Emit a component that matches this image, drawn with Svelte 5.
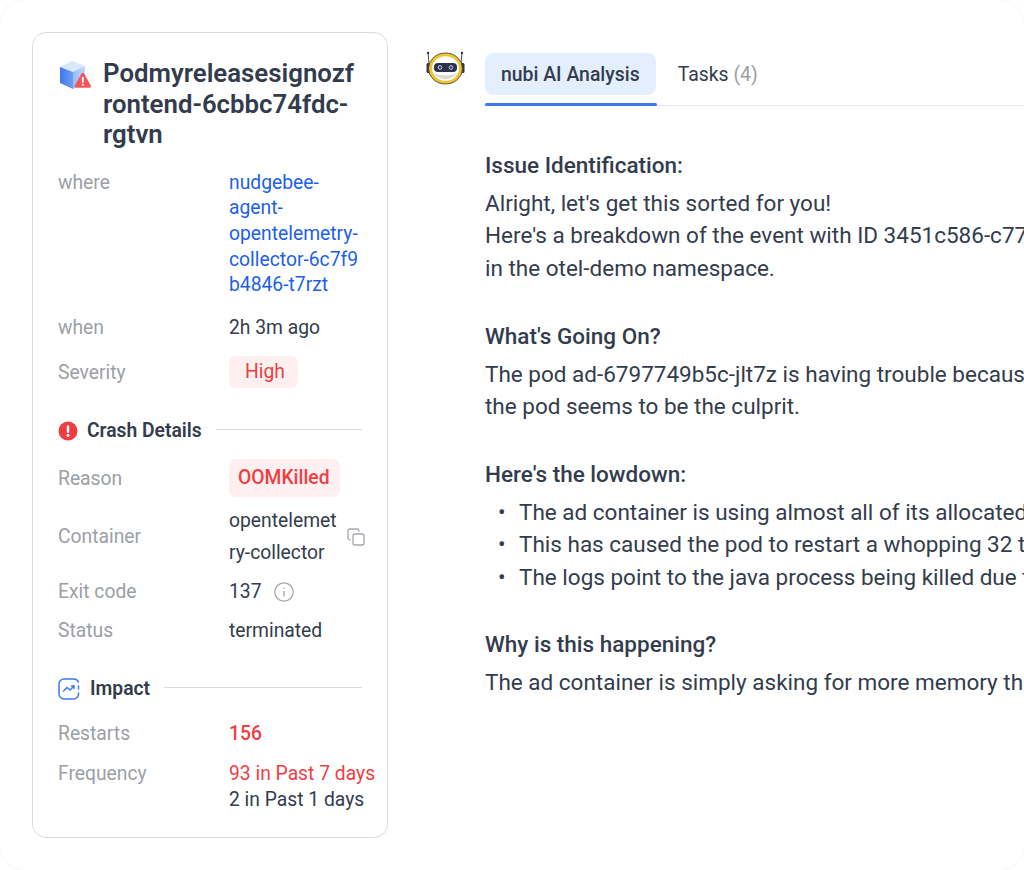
<script lang="ts">
  const where = ['nudgebee-', 'agent-', 'opentelemetry-', 'collector-6c7f9', 'b4846-t7rzt']
</script>

<div class="page">
  <aside class="card">
    <header class="title">
      <svg class="pod" viewBox="0 0 34 34" width="34" height="34" aria-hidden="true">
        <defs>
          <linearGradient id="left-face" x1="0" x2="1" y1="0" y2="0">
            <stop offset="0" stop-color="#3f78ea" />
            <stop offset="1" stop-color="#6f9df0" />
          </linearGradient>
          <linearGradient id="right-face" x1="0" x2="1" y1="0" y2="0">
            <stop offset="0" stop-color="#97b9f5" />
            <stop offset="1" stop-color="#c6d9fb" />
          </linearGradient>
        </defs>
        <path d="M2 8 L14 2 L27 7 L15 13 Z" fill="#dae8fd" />
        <path d="M2 8 L15 13 V30 L2 24 Z" fill="url(#left-face)" />
        <path d="M15 13 L27 7 V23 L15 30 Z" fill="url(#right-face)" />
        <path d="M23.500 14.500 a1.500 1.500 0 0 1 2.600 0 l6.700 12 a1.500 1.500 0 0 1 -1.300 2.300 h-13.400 a1.500 1.500 0 0 1 -1.300 -2.300 Z" fill="#f0575a" />
        <rect x="23.900" y="18" width="1.800" height="5.500" fill="#fff" />
        <rect x="23.900" y="24.800" width="1.800" height="1.900" fill="#fff" />
      </svg>
      <h1>Podmyreleasesignozf<br />rontend-6cbbc74fdc-<br />rgtvn</h1>
    </header>

    <dl class="rows">
      <div class="row where">
        <dt>where</dt>
        <dd class="link">
          {#each where as part}<span>{part}</span>{/each}
        </dd>
      </div>
      <div class="row when">
        <dt>when</dt>
        <dd>2h 3m ago</dd>
      </div>
      <div class="row severity">
        <dt>Severity</dt>
        <dd><span class="pill">High</span></dd>
      </div>
    </dl>

    <div class="section crash">
      <svg viewBox="0 0 20 20" width="20" height="20" aria-hidden="true">
        <circle cx="10" cy="10" r="9.500" fill="#ef3e42" />
        <rect x="8.800" y="4.300" width="2.400" height="7.600" rx="1.200" fill="#fff" />
        <circle cx="10" cy="14.500" r="1.400" fill="#fff" />
      </svg>
      <h2>Crash Details</h2>
      <span class="rule"></span>
    </div>

    <dl class="rows">
      <div class="row reason">
        <dt>Reason</dt>
        <dd><span class="pill strong">OOMKilled</span></dd>
      </div>
      <div class="row container">
        <dt>Container</dt>
        <dd class="with-icon">
          <span class="stack"><span>opentelemet</span><span>ry-collector</span></span>
          <svg viewBox="0 0 18 18" width="18" height="18" fill="none" stroke="#a3a7ad" stroke-width="1.300" aria-hidden="true">
            <rect x="6" y="6" width="11" height="11" rx="2" />
            <path d="M3.500 12 H3 a2 2 0 0 1 -2 -2 V3 a2 2 0 0 1 2 -2 h7 a2 2 0 0 1 2 2 v.5" />
          </svg>
        </dd>
      </div>
      <div class="row exit">
        <dt>Exit code</dt>
        <dd class="inline">
          137
          <svg viewBox="0 0 20 20" width="20" height="20" fill="none" stroke="#a3a7ad" stroke-width="1.300" aria-hidden="true">
            <circle cx="10" cy="10" r="9.200" />
            <path d="M10 9 V14.500" />
            <path d="M10 5.500 V6.800" />
          </svg>
        </dd>
      </div>
      <div class="row status">
        <dt>Status</dt>
        <dd>terminated</dd>
      </div>
    </dl>

    <div class="section impact">
      <svg viewBox="0 0 22 22" width="22" height="22" fill="none" stroke="#3b78f2" stroke-width="1.500" stroke-linecap="round" stroke-linejoin="round" aria-hidden="true">
        <path d="M20.500 15 V16 a5 5 0 0 1 -5 5 H6 a5 5 0 0 1 -5 -5 V6 a5 5 0 0 1 5 -5 H16 a5 5 0 0 1 4.500 3" />
        <path d="M20.500 8 V11" />
        <path d="M5.500 13 L9 9.500 L12 12 L16 8" />
        <path d="M13.500 8 H16 V10.500" />
      </svg>
      <h2>Impact</h2>
      <span class="rule"></span>
    </div>

    <dl class="rows">
      <div class="row restarts">
        <dt>Restarts</dt>
        <dd class="alert strong-num">156</dd>
      </div>
      <div class="row frequency">
        <dt>Frequency</dt>
        <dd class="stack"><span class="alert">93 in Past 7 days</span><span>2 in Past 1 days</span></dd>
      </div>
    </dl>
  </aside>

  <main class="analysis">
    <svg class="robot" viewBox="0 0 40 36" width="40" height="36" aria-hidden="true">
      <path d="M2 2 L3 12 M36 2 L35 12" stroke="#4a4f5c" stroke-width="1" />
      <circle cx="2" cy="2" r="1.200" fill="#2f3648" />
      <circle cx="36" cy="2" r="1.200" fill="#2f3648" />
      <rect x="0.500" y="12" width="4" height="10" rx="1.500" fill="#2f3648" />
      <rect x="34.500" y="12" width="4" height="10" rx="1.500" fill="#2f3648" />
      <ellipse cx="19.500" cy="17.500" rx="17" ry="15.500" fill="#f6c22c" stroke="#2f3648" stroke-width="0.800" />
      <ellipse cx="19.500" cy="17.500" rx="13.500" ry="12.300" fill="#fff" />
      <path d="M7 22 Q19.500 34.500 32 22 Q19.500 27 7 22 Z" fill="#d9d9d9" />
      <rect x="8" y="12" width="23" height="9" rx="4" fill="#2a3350" />
      <circle cx="14" cy="16.500" r="1.800" fill="none" stroke="#cfd6e6" stroke-width="1" />
      <circle cx="25" cy="16.500" r="1.800" fill="none" stroke="#cfd6e6" stroke-width="1" />
    </svg>

    <div class="content">
      <nav class="tabs">
        <button class="tab active">nubi AI Analysis</button>
        <button class="tab">Tasks <span class="count">(4)</span></button>
      </nav>

      <article class="body">
        <section>
          <h3>Issue Identification:</h3>
          <p>Alright, let's get this sorted for you!</p>
          <p>Here's a breakdown of the event with ID 3451c586-c77f</p>
          <p>in the otel-demo namespace.</p>
        </section>
        <section>
          <h3>What's Going On?</h3>
          <p>The pod ad-6797749b5c-jlt7z is having trouble because</p>
          <p>the pod seems to be the culprit.</p>
        </section>
        <section>
          <h3>Here's the lowdown:</h3>
          <ul>
            <li>The ad container is using almost all of its allocated</li>
            <li>This has caused the pod to restart a whopping 32 times</li>
            <li>The logs point to the java process being killed due to</li>
          </ul>
        </section>
        <section>
          <h3>Why is this happening?</h3>
          <p>The ad container is simply asking for more memory than</p>
        </section>
      </article>
    </div>
  </main>
</div>

<style>
  :global(body) {
    margin: 0;
    overflow: hidden;
    background: #fff;
  }

  .page {
    box-sizing: border-box;
    display: flex;
    width: 1026px;
    height: 872px;
    margin: -1px;
    padding: 32px 0 0 32px;
    border: 1px solid #f6f6f6;
    border-radius: 26px;
    overflow: hidden;
    font-family: Roboto, "Liberation Sans", sans-serif;
    color: #333c4d;
  }

  .card {
    box-sizing: border-box;
    flex: none;
    width: 356px;
    height: 806px;
    padding: 25px 12px 0 25px;
    border: 1px solid #d9dbdf;
    border-radius: 14px;
    font-size: 19.300px;
  }

  .title {
    display: flex;
    gap: 11px;
  }

  .pod {
    flex: none;
    margin-top: 1px;
  }

  h1 {
    margin: 0;
    font-size: 25.800px;
    font-weight: 600;
    line-height: 30.500px;
    white-space: nowrap;
  }

  .rows {
    margin: 0;
  }

  .row {
    display: grid;
    grid-template-columns: 171px minmax(0, 1fr);
  }

  dt {
    color: #9ca0a6;
  }

  dd {
    margin: 0;
  }

  .where {
    margin-top: 20px;
    line-height: 25.700px;
  }

  .link {
    display: flex;
    flex-direction: column;
    color: #1d5fe8;
  }

  .when {
    margin-top: 17px;
    line-height: 26px;
  }

  .severity {
    align-items: center;
    margin-top: 15px;
  }

  .pill {
    display: inline-block;
    padding: 4px 13px 4px 16px;
    border-radius: 7px;
    background: #fef0f0;
    color: #ef3e42;
    line-height: 24px;
  }

  .pill.strong {
    padding: 7px 10px 7px 9px;
    font-weight: 500;
  }

  .section {
    display: flex;
    align-items: center;
    gap: 9px;
    padding-right: 13px;
    line-height: 26px;
  }

  .section h2 {
    margin: 0;
    font-size: 19.300px;
    font-weight: 600;
    white-space: nowrap;
  }

  .rule {
    flex: 1;
    height: 1px;
    margin: -3px 0 0 5px;
    background: #d9dbdf;
  }

  .crash {
    margin-top: 30px;
  }

  .reason {
    align-items: center;
    margin-top: 15px;
  }

  .container {
    align-items: center;
    margin-top: 8px;
    line-height: 32px;
  }

  .with-icon {
    display: flex;
    align-items: center;
    gap: 10px;
  }

  .stack {
    display: flex;
    flex-direction: column;
  }

  .exit {
    margin-top: 10px;
    line-height: 26px;
  }

  .inline {
    display: flex;
    align-items: center;
    gap: 12px;
  }

  .status {
    margin-top: 13px;
    line-height: 26px;
  }

  .impact {
    margin-top: 32px;
  }

  .impact svg {
    margin-right: 1px;
  }

  .restarts {
    margin-top: 19px;
    line-height: 26px;
  }

  .alert {
    color: #ef3e42;
  }

  .strong-num {
    font-weight: 500;
  }

  .frequency {
    margin-top: 14px;
    line-height: 26px;
    white-space: nowrap;
  }

  .analysis {
    display: flex;
    flex: 1;
    min-width: 0;
    margin-left: 38px;
    gap: 19px;
  }

  .robot {
    flex: none;
    margin-top: 19px;
  }

  .content {
    flex: 1;
    min-width: 0;
    margin-top: 21px;
  }

  .tabs {
    display: flex;
    height: 52px;
    border-bottom: 1px solid #e5e7eb;
  }

  .tab {
    height: 42px;
    padding: 0 22px;
    border: 0;
    border-radius: 8px;
    background: none;
    font: inherit;
    font-size: 19.400px;
    color: #333c4d;
  }

  .tab.active {
    position: relative;
    padding: 0 16px;
    background: #e3effe;
    font-weight: 500;
  }

  .tab.active::after {
    content: "";
    position: absolute;
    left: 0;
    right: -1px;
    bottom: -11px;
    height: 3px;
    border-radius: 2px;
    background: #3b78f2;
  }

  .count {
    color: #9a9ea5;
  }

  .body {
    padding-top: 43px;
    font-size: 22.500px;
    line-height: 32.400px;
    white-space: nowrap;
  }

  section {
    margin-bottom: 35.500px;
  }

  h3 {
    margin: 0 0 5.500px;
    font-size: 22.500px;
    font-weight: 500;
  }

  p {
    margin: 0;
  }

  ul {
    margin: 0;
    padding: 0 0 0 13px;
    list-style: none;
  }

  li {
    display: flex;
  }

  li::before {
    content: "•";
    flex: none;
    width: 21px;
  }
</style>
